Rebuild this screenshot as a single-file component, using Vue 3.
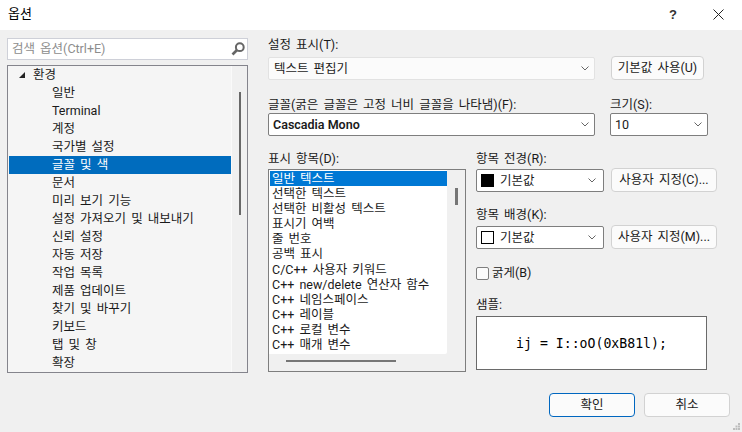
<script setup>
const tree = ['일반','Terminal','계정','국가별 설정','글꼴 및 색','문서','미리 보기 기능','설정 가져오기 및 내보내기','신뢰 설정','자동 저장','작업 목록','제품 업데이트','찾기 및 바꾸기','키보드','탭 및 창','확장']
const items = ['일반 텍스트','선택한 텍스트','선택한 비활성 텍스트','표시기 여백','줄 번호','공백 표시','C/C++ 사용자 키워드','C++ new/delete 연산자 함수','C++ 네임스페이스','C++ 레이블','C++ 로컬 변수','C++ 매개 변수']
</script>

<template>
  <div class="win">
    <header class="title">
      <span class="title-text">옵션</span>
      <span class="help">?</span>
      <svg class="close" width="11" height="11" viewBox="0 0 11 11"><path d="M.5.5l10 10M10.5.5l-10 10" stroke="#222" fill="none"/></svg>
    </header>
    <main class="body">
      <section class="left">
        <div class="search">
          <span class="ph">검색 옵션(Ctrl+E)</span>
          <svg width="14" height="14" viewBox="0 0 14 14"><circle cx="8.8" cy="5.2" r="3.9" fill="none" stroke="#666" stroke-width="2"/><path d="M6 8L1.5 12.5" stroke="#666" stroke-width="2.6"/></svg>
        </div>
        <div class="tree">
          <div class="tree-list">
            <div class="t-row root"><i class="tri"></i>환경</div>
            <div v-for="t in tree" :key="t" class="t-row child" :class="{ sel: t === '글꼴 및 색' }">{{ t }}</div>
          </div>
          <div class="t-scroll"><i></i></div>
        </div>
      </section>
      <section class="right">
        <label class="lbl first">설정 표시(T):</label>
        <div class="row1">
          <div class="combo flat w327"><span>텍스트 편집기</span><svg class="chev" width="8" height="5" viewBox="0 0 8 5"><path d="M.5.5L4 4 7.500.5" fill="none" stroke="#666"/></svg></div>
          <button class="btn def">기본값 사용(U)</button>
        </div>
        <div class="row2">
          <div class="f-col">
            <label class="lbl">글꼴(굵은 글꼴은 고정 너비 글꼴을 나타냄)(F):</label>
            <div class="combo w327"><b>Cascadia Mono</b><svg class="chev" width="8" height="5" viewBox="0 0 8 5"><path d="M.5.5L4 4 7.500.5" fill="none" stroke="#666"/></svg></div>
          </div>
          <div class="s-col">
            <label class="lbl">크기(S):</label>
            <div class="combo"><span>10</span><svg class="chev" width="8" height="5" viewBox="0 0 8 5"><path d="M.5.5L4 4 7.500.5" fill="none" stroke="#666"/></svg></div>
          </div>
        </div>
        <div class="row3">
          <div class="d-col">
            <label class="lbl">표시 항목(D):</label>
            <div class="list">
              <div class="l-main">
                <div class="l-items">
                  <div v-for="(it, i) in items" :key="it" class="l-row" :class="{ on: i === 0 }">{{ it }}</div>
                </div>
                <div class="l-v"><i></i></div>
              </div>
              <div class="l-h"><i></i></div>
            </div>
          </div>
          <div class="c-col">
            <label class="lbl">항목 전경(R):</label>
            <div class="color-row top">
              <div class="combo cc"><i class="swatch black"></i><span>기본값</span><svg class="chev" width="8" height="5" viewBox="0 0 8 5"><path d="M.5.5L4 4 7.500.5" fill="none" stroke="#666"/></svg></div>
              <button class="btn cust">사용자 지정(C)...</button>
            </div>
            <label class="lbl l2">항목 배경(K):</label>
            <div class="color-row">
              <div class="combo cc"><i class="swatch"></i><span>기본값</span><svg class="chev" width="8" height="5" viewBox="0 0 8 5"><path d="M.5.5L4 4 7.500.5" fill="none" stroke="#666"/></svg></div>
              <button class="btn cust">사용자 지정(M)...</button>
            </div>
            <div class="check"><i></i><span>굵게(B)</span></div>
            <label class="lbl l3">샘플:</label>
            <div class="sample">ij = I::oO(0xB81l);</div>
          </div>
        </div>
      </section>
    </main>
    <footer class="foot">
      <button class="btn act primary">확인</button>
      <button class="btn act">취소</button>
      <svg class="grip" width="8" height="8" viewBox="0 0 8 8" fill="#bdbdbd"><rect x="5" y="0" width="2" height="2"/><rect x="2.500" y="2.500" width="2" height="2"/><rect x="5" y="2.500" width="2" height="2"/><rect x="0" y="5" width="2" height="2"/><rect x="2.500" y="5" width="2" height="2"/><rect x="5" y="5" width="2" height="2"/></svg>
    </footer>
  </div>
</template>

<style>
html, body { margin: 0; background: #f0f0f0; }
</style>

<style scoped>
.win {
  width: 742px; height: 432px; overflow: hidden; display: flex; flex-direction: column;
  background: #f0f0f0; color: #1a1a1a;
  font: 12.5px/16px Roboto, "Noto Sans CJK KR", sans-serif;
  word-spacing: 2px;
}
.title { height: 30px; flex: none; background: #fff; display: flex; align-items: center; box-sizing: border-box; padding: 0 18px 2px 8px; }
.title-text { flex: 1; font-size: 13px; color: #000; }
.help { font: bold 13px "Liberation Sans", sans-serif; color: #333; margin-right: 36px; }
.body { display: flex; height: 342px; flex: none; padding: 8px 0 0 7px; box-sizing: border-box; }
.left { width: 241px; flex: none; }
.search { background: #fff; border: 1px solid #ced0d8; box-sizing: border-box; height: 22px; display: flex; align-items: center; justify-content: space-between; padding: 0 2px 0 4px; color: #8d8d8d; }
.tree { height: 308px; margin-top: 5px; box-sizing: border-box; border: 1px solid #84848c; background: #f5f5f5; display: flex; }
.tree-list { width: 222px; padding: 0 0 0 1px; }
.t-row { height: 18px; line-height: 18px; white-space: nowrap; }
.root { padding-left: 24px; position: relative; }
.tri { position: absolute; left: 10px; top: 6px; width: 0; height: 0; border-left: 6px solid transparent; border-bottom: 6px solid #222; }
.child { padding-left: 43px; }
.sel { background: #006cbe; color: #fff; }
.t-scroll { flex: 1; background: #f0f0f0; border-left: 1px solid #fafafa; padding-top: 26px; display: flex; justify-content: center; }
.t-scroll i { width: 2px; height: 123px; background: #686868; margin-left: 1px; }
.right { margin-left: 20px; width: 460px; }
.lbl { display: block; height: 16px; line-height: 16px; white-space: nowrap; }
.first { margin-top: -1px; }
.combo { box-sizing: border-box; height: 23px; background: #fff; border: 1px solid #7e7e7e; border-radius: 2px; display: flex; align-items: center; padding: 0 5px 0 4px; justify-content: space-between; }
.combo.flat { background: #fbfbfb; border-color: #e2e2e2; margin-top: 4px; padding-left: 5px; }
.combo b { font-weight: 600; font-size: 12.5px; word-spacing: 0; }
.w327 { width: 327px; }
.row1 { display: flex; gap: 16px; align-items: flex-start; }
.btn { box-sizing: border-box; border: 1px solid #d2d2d2; border-radius: 4px; background: #fbfbfb; font: inherit; color: #1a1a1a; padding: 0; word-spacing: inherit; }
.def { width: 93px; height: 24px; margin-top: 3px; }
.row2 { display: flex; gap: 15px; margin-top: 17px; }
.s-col { width: 98px; }
.row3 { display: flex; margin-top: 15px; }
.d-col { width: 208px; flex: none; }
.list { box-sizing: border-box; width: 198px; height: 203px; margin-top: 2px; border: 1px solid #7e7e7e; background: #f0f0f0; }
.l-main { display: flex; height: 184px; }
.l-items { width: 178px; background: #fff; padding: 1px 0 0 1px; box-sizing: border-box; border-radius: 0 0 2px 0; overflow: hidden; }
.l-row { height: 15.100px; line-height: 15px; padding-left: 2px; white-space: nowrap; }
.on { background: #0078d4; color: #fff; }
.l-v { flex: 1; padding-top: 18px; display: flex; justify-content: center; }
.l-v i { width: 3px; height: 17px; background: #767676; }
.l-h { padding: 6px 0 0 17px; }
.l-h i { display: block; width: 110px; height: 2px; background: #767676; }
.c-col { width: 242px; }
.color-row { display: flex; gap: 7px; margin-top: 3px; align-items: flex-start; }
.color-row.top { margin-top: 2px; }
.cc { width: 128px; justify-content: flex-start; gap: 6px; padding-left: 4px; padding-right: 7px; }
.cc .chev { margin-left: auto; }
.cust { width: 106px; height: 24px; margin-top: -1px; white-space: nowrap; }
.swatch { width: 13px; height: 13px; box-sizing: border-box; border: 1px solid #000; background: #fff; }
.swatch.black { background: #000; }
.l2 { margin-top: 15px; }
.check { display: flex; align-items: center; gap: 3px; margin-top: 16px; height: 16px; }
.check i { width: 11px; height: 11px; border: 1px solid #7e7e7e; border-radius: 2px; background: #fbfbfb; }
.l3 { margin-top: 16px; }
.sample { box-sizing: border-box; width: 231px; height: 54px; margin-top: 3px; background: #fff; border: 1px solid #6a6a6a; display: flex; align-items: center; justify-content: center; font: 13.200px "DejaVu Sans Mono", monospace; color: #000; word-spacing: 0; }
.foot { flex: 1; position: relative; display: flex; justify-content: flex-end; gap: 9px; padding: 21px 12px 0 0; }
.act { width: 86px; height: 24px; }
.primary { border: 1.5px solid #0067c0; }
.grip { position: absolute; right: 1px; bottom: 1px; }
</style>
